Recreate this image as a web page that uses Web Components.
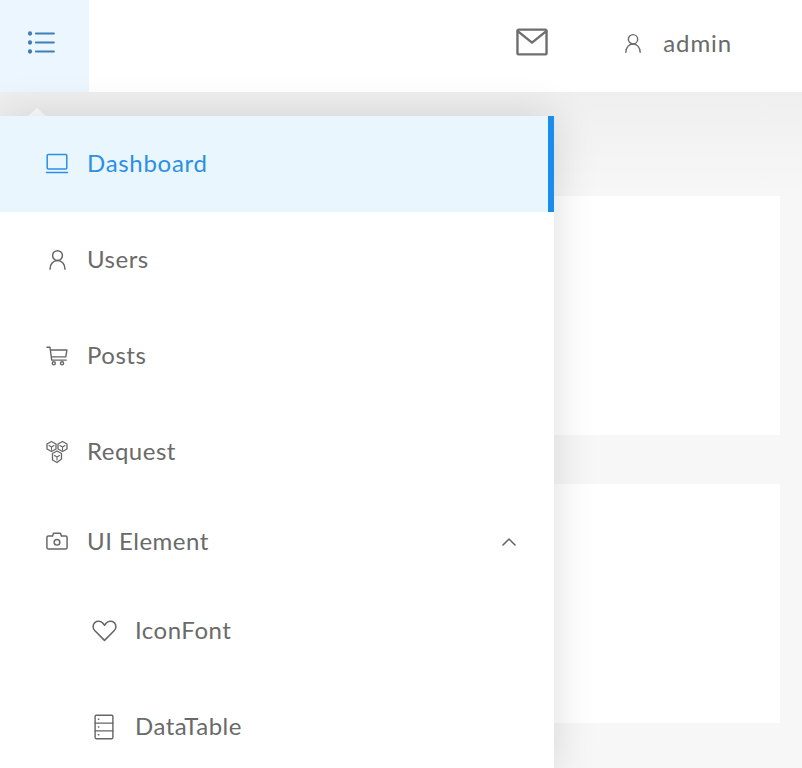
<!DOCTYPE html>
<html lang="en">
<head>
<meta charset="utf-8">
<title>Admin</title>
<style>
  html, body { margin: 0; height: 100%; overflow: hidden; }
  body { font-family: Lato, "Open Sans", sans-serif; color: #6a6a6a; background: #f7f7f7; }
</style>
</head>
<body>
<admin-app>
  <admin-header slot="header"></admin-header>
  <admin-card></admin-card>
  <admin-card></admin-card>
  <side-menu slot="menu">
    <menu-item icon="laptop" active>Dashboard</menu-item>
    <menu-item icon="user">Users</menu-item>
    <menu-item icon="cart">Posts</menu-item>
    <menu-item icon="hex">Request</menu-item>
    <menu-item icon="camera" group>UI Element</menu-item>
    <menu-item icon="heart" sub>IconFont</menu-item>
    <menu-item icon="table" sub>DataTable</menu-item>
  </side-menu>
</admin-app>

<script>
// Icons are drawn on a 24px box, stroke colour comes from currentColor.
const ICONS = {
  menu: `<circle cx="1.800" cy="4" r="1.900" fill="currentColor" stroke="none"/><circle cx="1.800" cy="12" r="1.900" fill="currentColor" stroke="none"/><circle cx="1.800" cy="20" r="1.900" fill="currentColor" stroke="none"/><path d="M7 4h16M7 12h16M7 20h16" stroke-width="1.800"/>`,
  mail: `<rect x="1.100" y="2.700" width="21.800" height="18.600" rx="1" stroke-width="1.800"/><path d="M1.500 4 12 12.500 22.500 4" stroke-width="1.800"/>`,
  user: `<circle cx="12" cy="7.500" r="5.600" stroke-width="1.700"/><path d="M3.400 23c0-5.400 3.600-9.800 8.600-9.800s8.600 4.400 8.600 9.800" stroke-width="1.700"/>`,
  laptop: `<rect x="2.200" y="2.500" width="19.600" height="14.500" rx="1" stroke-width="1.500"/><path d="M1.500 20.500h21" stroke-width="1.500"/>`,
  cart: `<path d="M1 2.500h3.400l1.800 14h15.800M4.800 5.500h18l-1.200 7.500H5.800" stroke-width="1.500"/><circle cx="8.500" cy="20" r="1.700" stroke-width="1.500"/><circle cx="17.500" cy="20" r="1.700" stroke-width="1.500"/>`,
  hex: `<path d="M6.500 1.500l4.500 2.500v5l-4.500 2.500L2 9V4zM17.500 1.500L22 4v5l-4.500 2.500L13 9V4zM12 11l4.500 2.500v5.500L12 22.500 7.500 20v-6.500z" stroke-width="1.300"/><path d="M4 5.500l2.500 1.500L9 5.500M6.500 7v3M15 5.500l2.500 1.500L20 5.500M17.500 7v3M9.500 15.500l2.500 1.500 2.500-1.500M12 17v3" stroke-width="1.100"/>`,
  camera: `<path d="M2.600 6.500h4.600l1-3h7.600l1 3h4.600c.9 0 1.600.7 1.600 1.600v11c0 .9-.7 1.600-1.600 1.600H2.600c-.9 0-1.600-.7-1.600-1.600V8.100c0-.9.7-1.600 1.600-1.600z" stroke-width="1.600"/><circle cx="12" cy="13.400" r="3.100" stroke-width="1.600"/>`,
  heart: `<path d="M12 21.500 2.800 12.300C.400 9.800.600 6.300 2.700 4.400c2.400-2 5.900-1.500 7.800.7L12 7l1.500-1.900c1.900-2.200 5.400-2.700 7.800-.7 2.100 1.900 2.300 5.400-.1 7.900z" stroke-width="1.500"/>`,
  table: `<rect x="3.800" y="1.200" width="16.400" height="21.600" rx="1" stroke-width="1.300"/><path d="M3.800 8.400h16.400M3.800 15.600h16.400" stroke-width="1.300"/><path d="M6.800 4.800h.4M6.800 12h.4M6.800 19.200h.4" stroke-width="1.300"/>`,
  up: `<path d="M3 16.500 12 7.500l9 9" stroke-width="2.400"/>`,
};

const ICON_SIZES = { user: 21, cart: 22, camera: 22, heart: 25, table: 26 };

const icon = (name, size) =>
  `<svg width="${size}" height="${size}" viewBox="0 0 24 24" fill="none" stroke="currentColor" stroke-linecap="round" stroke-linejoin="round" aria-hidden="true">${ICONS[name]}</svg>`;

class AdminApp extends HTMLElement {
  constructor() {
    super();
    this.attachShadow({ mode: "open" }).innerHTML = `
<style>
:host { display: block; position: relative; height: 100vh; overflow: hidden; background: #f7f7f7; }
.shade {
  height: 104px;
  margin-bottom: -104px;
  background: linear-gradient(#efefef, #f7f7f7);
}
.main {
  display: flex;
  flex-direction: column;
  gap: 49px;
  padding: 104px 22px 0 20px;
}
.menu { position: absolute; top: 116px; left: 0; }
</style>
<slot name="header"></slot>
<div class="shade"></div>
<div class="main"><slot></slot></div>
<div class="menu"><slot name="menu"></slot></div>`;
  }
}

class AdminHeader extends HTMLElement {
  constructor() {
    super();
    this.attachShadow({ mode: "open" }).innerHTML = `
<style>
:host { display: flex; align-items: stretch; height: 92px; background: #fff; color: #6a6a6a; position: relative; }
.toggle {
  position: relative;
  width: 89px;
  display: flex;
  align-items: center;
  justify-content: center;
  padding: 0 6px 8px 0;
  box-sizing: border-box;
  background: #ebf6fe;
  color: #3f7fb8;
}
.toggle::after {
  content: "";
  position: absolute;
  left: 28px;
  top: 108px;
  border: 9px solid transparent;
  border-top: 0;
  border-bottom: 8px solid #fff;
}
.right { margin-left: auto; display: flex; align-items: center; padding-bottom: 6px; }
.mail { margin: 0 75px 2px 0; display: flex; color: #6e6e6e; }
.user { display: flex; align-items: center; gap: 20px; margin-right: 70px; font-size: 24px; letter-spacing: .9px; }
.user span { padding-bottom: 2px; }
</style>
<div class="toggle">${icon("menu", 27)}</div>
<div class="right">
  <span class="mail">${icon("mail", 32)}</span>
  <span class="user">${icon("user", 20)}<span>admin</span></span>
</div>`;
  }
}

class AdminCard extends HTMLElement {
  constructor() {
    super();
    this.attachShadow({ mode: "open" }).innerHTML = `
<style>:host { display: block; height: 239px; background: #fff; }</style>`;
  }
}

class SideMenu extends HTMLElement {
  constructor() {
    super();
    this.attachShadow({ mode: "open" }).innerHTML = `
<style>
:host {
  display: block;
  width: 554px;
  height: 660px;
  background: #fff;
  box-shadow: 0 0 40px rgba(0, 0, 0, .14);
}
</style>
<slot></slot>`;
  }
}

class MenuItem extends HTMLElement {
  constructor() {
    super();
    const name = this.getAttribute("icon");
    const group = this.hasAttribute("group");
    this.attachShadow({ mode: "open" }).innerHTML = `
<style>
:host {
  display: flex;
  align-items: center;
  box-sizing: border-box;
  height: 96px;
  padding-left: 45px;
  color: #6a6a6a;
  font-size: 24px;
  letter-spacing: .5px;
}
:host([active]) { background: #eaf6fd; color: #2a8fe6; border-right: 6px solid #1a8ceb; letter-spacing: .7px; }
:host([group]) { height: 83px; }
:host([sub]) { padding-left: 91px; }
.ic { display: flex; justify-content: center; width: 24px; margin-right: 18px; padding-bottom: 1px; color: #666; }
:host([sub]) .ic { width: 26px; }
:host([active]) .ic { color: inherit; }
.label { padding-bottom: 4px; }
:host([group]) .label { padding-bottom: 2px; }
.arrow { margin-left: auto; margin-right: 37px; display: flex; color: #666; }
</style>
<span class="ic">${icon(name, ICON_SIZES[name] || 24)}</span>
<span class="label"><slot></slot></span>
${group ? `<span class="arrow">${icon("up", 16)}</span>` : ""}`;
  }
}

customElements.define("admin-app", AdminApp);
customElements.define("admin-header", AdminHeader);
customElements.define("admin-card", AdminCard);
customElements.define("side-menu", SideMenu);
customElements.define("menu-item", MenuItem);
</script>
</body>
</html>
